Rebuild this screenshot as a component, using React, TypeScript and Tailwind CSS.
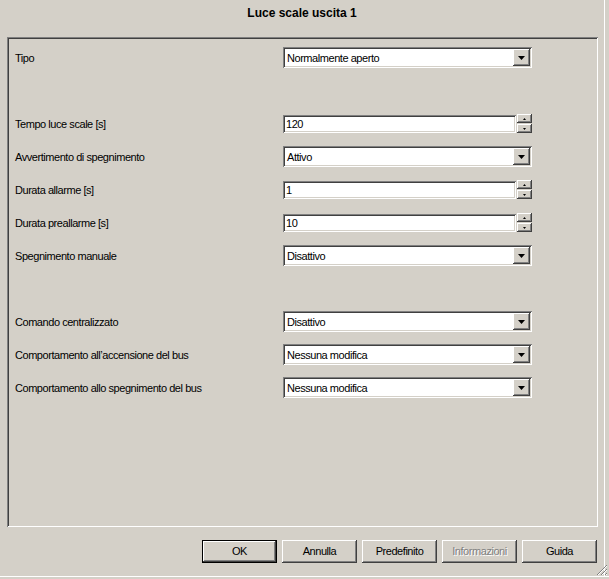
import React from 'react';

type Row =
  | { label: string; kind: 'select' | 'spin'; value: string }
  | null;

const ROWS: Row[] = [
  { label: 'Tipo', kind: 'select', value: 'Normalmente aperto' },
  null,
  { label: 'Tempo luce scale [s]', kind: 'spin', value: '120' },
  { label: 'Avvertimento di spegnimento', kind: 'select', value: 'Attivo' },
  { label: 'Durata allarme [s]', kind: 'spin', value: '1' },
  { label: 'Durata preallarme [s]', kind: 'spin', value: '10' },
  { label: 'Spegnimento manuale', kind: 'select', value: 'Disattivo' },
  null,
  { label: 'Comando centralizzato', kind: 'select', value: 'Disattivo' },
  { label: 'Comportamento all’accensione del bus', kind: 'select', value: 'Nessuna modifica' },
  { label: 'Comportamento allo spegnimento del bus', kind: 'select', value: 'Nessuna modifica' },
];

const RAISED =
  'bg-[#d4d0c8] shadow-[inset_-1px_-1px_0_#404040,inset_1px_1px_0_#ffffff,inset_-2px_-2px_0_#808080,inset_2px_2px_0_#d4d0c8]';
const SUNKEN =
  'bg-white shadow-[inset_1px_1px_0_#808080,inset_-1px_-1px_0_#ffffff,inset_2px_2px_0_#404040,inset_-2px_-2px_0_#d4d0c8]';

function Select({ value }: { value: string }) {
  return (
    <div className={`flex h-[21px] w-[249px] p-[2px] ${SUNKEN}`}>
      <div className="flex flex-1 items-center pl-[2px] pt-[1px] text-black">{value}</div>
      <div className={`flex h-[17px] w-[17px] items-center justify-center ${RAISED}`}>
        <svg width="7" height="4" viewBox="0 0 7 4">
          <path d="M0 0h7L3.5 4z" fill="#000" />
        </svg>
      </div>
    </div>
  );
}

function Spin({ value }: { value: string }) {
  return (
    <div className="flex items-center">
      <div className={`flex h-[18px] w-[233px] items-center pl-[3px] pt-[1px] ${SUNKEN}`}>{value}</div>
      <div className="ml-[1px] flex w-[15px] flex-col gap-[1px]">
        <div className={`flex h-[9px] items-center justify-center ${RAISED}`}>
          <svg width="3" height="2" viewBox="0 0 3 2">
            <path d="M1.5 0L3 2H0z" fill="#000" />
          </svg>
        </div>
        <div className={`flex h-[9px] items-center justify-center ${RAISED}`}>
          <svg width="3" height="2" viewBox="0 0 3 2">
            <path d="M0 0h3L1.5 2z" fill="#000" />
          </svg>
        </div>
      </div>
    </div>
  );
}

function Button({ label, primary, disabled }: { label: string; primary?: boolean; disabled?: boolean }) {
  return (
    <div
      className={`flex h-[23px] w-[75px] items-center justify-center ${
        primary
          ? 'bg-[#d4d0c8] shadow-[inset_0_0_0_1px_#000000,inset_-2px_-2px_0_#404040,inset_2px_2px_0_#ffffff,inset_-3px_-3px_0_#808080]'
          : RAISED
      } ${disabled ? 'text-[#808080] [text-shadow:1px_1px_0_#ffffff]' : 'text-black'}`}
    >
      {label}
    </div>
  );
}

export default function App() {
  return (
    <div className="relative flex h-[579px] w-[609px] overflow-hidden bg-[#d4d0c8] font-['Liberation_Sans',Arial,sans-serif] text-[11px] tracking-[-0.45px] text-black">
      {/* Dialog body */}
      <div className="flex w-[604px] flex-col">
        {/* Title */}
        <div className="flex h-[37px] items-start justify-center pt-[4px] text-[12px] font-bold tracking-normal">
          Luce scale uscita 1
        </div>

        {/* Parameter frame */}
        <div className="ml-[7px] mr-[6px] h-[490px] pl-[8px] pt-[4px] shadow-[inset_1px_1px_0_#808080,inset_-1px_-1px_0_#ffffff,inset_2px_2px_0_#404040]">
          {ROWS.map((row, i) =>
            row ? (
              <div key={i} className="flex h-[33px] items-center">
                <div className="w-[268px] pt-[1px]">{row.label}</div>
                {row.kind === 'select' ? <Select value={row.value} /> : <Spin value={row.value} />}
              </div>
            ) : (
              <div key={i} className="h-[33px]" />
            ),
          )}
        </div>

        {/* Buttons */}
        <div className="mt-[13px] flex justify-end gap-[5px] pr-[7px]">
          <Button label="OK" primary />
          <Button label="Annulla" />
          <Button label="Predefinito" />
          <Button label="Informazioni" disabled />
          <Button label="Guida" />
        </div>
      </div>

      {/* Window edge */}
      <div className="h-[576px] w-[1px] bg-white" />

      <div className="absolute bottom-0 left-0 h-[3px] w-full border-t border-white" />

      {/* Resize grip */}
      <svg className="absolute bottom-[3px] right-[1px]" width="12" height="12" viewBox="0 0 12 12">
        <path d="M11 1L1 11M11 5L5 11M11 9L9 11" stroke="#808080" strokeWidth="1" />
        <path d="M11 2L2 11M11 6L6 11M11 10L10 11" stroke="#ffffff" strokeWidth="1" />
      </svg>
    </div>
  );
}
